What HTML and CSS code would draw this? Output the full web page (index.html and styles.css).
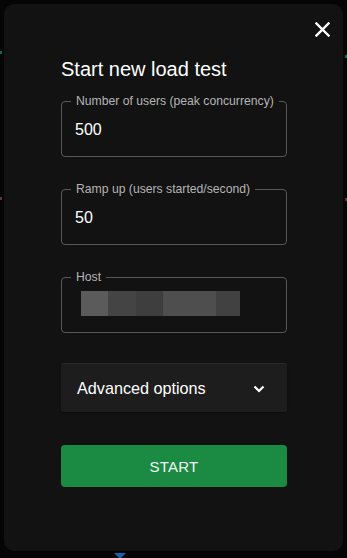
FILE: index.html
```html
<!DOCTYPE html>
<html lang="en">
<head>
<meta charset="utf-8">
<title>Start new load test</title>
<link rel="stylesheet" href="styles.css">
</head>
<body>
<div class="bg-bit bit-green-l"></div>
<div class="bg-bit bit-pink-l"></div>
<div class="bg-bit bit-green-r"></div>
<div class="bg-bit bit-pink-r"></div>
<div class="bg-tri"></div>
<div class="modal">
  <button class="close" aria-label="Close">
    <svg width="15" height="15" viewBox="0 0 15 15"><path d="M1.5 1.5 L13.5 13.5 M13.5 1.5 L1.5 13.5" stroke="#fff" stroke-width="2.4" stroke-linecap="square"/></svg>
  </button>
  <h2 class="title">Start new load test</h2>
  <form class="form">
    <div class="field">
      <span class="label">Number of users (peak concurrency)</span>
      <div class="value">500</div>
    </div>
    <div class="field">
      <span class="label">Ramp up (users started/second)</span>
      <div class="value">50</div>
    </div>
    <div class="field">
      <span class="label">Host</span>
      <div class="value blur">
        <span class="px p1"></span><span class="px p2"></span><span class="px p3"></span><span class="px p4"></span><span class="px p5"></span>
      </div>
    </div>
    <div class="accordion">
      <span>Advanced options</span>
      <svg width="12" height="8" viewBox="0 0 12 8"><path d="M1.5 1.5 L6 6 L10.5 1.5" fill="none" stroke="#fff" stroke-width="2.2"/></svg>
    </div>
    <button type="button" class="start">START</button>
  </form>
</div>
</body>
</html>
```
FILE: styles.css
```css
* { box-sizing: border-box; }
html, body { margin: 0; padding: 0; }
body {
  background: #050505;
  width: 347px;
  height: 558px;
  overflow: hidden;
  position: relative;
  font-family: "Liberation Sans", Arial, sans-serif;
  color: #fff;
}
.bg-bit { position: absolute; width: 2px; height: 3px; }
.bit-green-l { left: 0; top: 51px; background: #0f6b4c; }
.bit-pink-l { left: 0; top: 197px; background: #6b2f4a; }
.bit-green-r { right: 0; top: 55px; background: #0f6b4c; }
.bit-pink-r { right: 0; top: 198px; background: #5a3a3a; }
.bg-tri {
  position: absolute; left: 114px; top: 553px;
  width: 0; height: 0;
  border-left: 6px solid transparent; border-right: 6px solid transparent;
  border-top: 6px solid #1d5fa8;
}
.modal {
  position: relative;
  margin: 4px;
  width: 339px;
  height: 547px;
  background: #121212;
  border-radius: 10px;
  padding: 53px 56px 0 57px;
}
.close {
  position: absolute;
  top: 18px; right: 13px;
  width: 15px; height: 15px;
  padding: 0; border: 0; background: none;
  display: flex;
}
.title {
  margin: 0;
  font-size: 20px;
  line-height: 24px;
  font-weight: 400;
}
.form {
  margin-top: 20px;
  display: flex;
  flex-direction: column;
}
.field {
  position: relative;
  height: 56px;
  border: 1px solid #575757;
  border-radius: 4px;
  padding: 15.5px 13px;
  margin-bottom: 32px;
}
.label {
  position: absolute;
  top: -8px; left: 9px;
  padding: 0 5px;
  background: #121212;
  font-size: 12.2px;
  line-height: 14px;
  color: #b5b5b5;
  white-space: nowrap;
}
.value {
  font-size: 16px;
  line-height: 23px;
  color: #fff;
}
.blur {
  display: flex;
  margin-left: 6px;
  margin-top: -3px;
  height: 25px;
}
.px { display: block; height: 25px; }
.p1 { width: 27px; background: #5b5b5b; }
.p2 { width: 28px; background: #444; }
.p3 { width: 27px; background: #3e3e3e; }
.p4 { width: 53px; background: #4e4e4e; }
.p5 { width: 24px; background: #414141; }
.accordion {
  margin-top: -1px;
  height: 48px;
  background: #1d1d1d;
  border-radius: 2px;
  box-shadow: 0 -1px 0 #2a2a2a, 0 1px 2px rgba(0,0,0,0.4);
  display: flex;
  align-items: center;
  justify-content: space-between;
  padding: 1px 22px 0 16px;
  font-size: 16.2px;
}
.start {
  margin-top: 33px;
  height: 42px;
  width: 100%;
  border: 0;
  border-radius: 4px;
  background: #1b8a43;
  color: #f2f8f4;
  font-family: "Liberation Sans", Arial, sans-serif;
  font-size: 15px;
  letter-spacing: 0.2px;
  padding: 0;
}
```
